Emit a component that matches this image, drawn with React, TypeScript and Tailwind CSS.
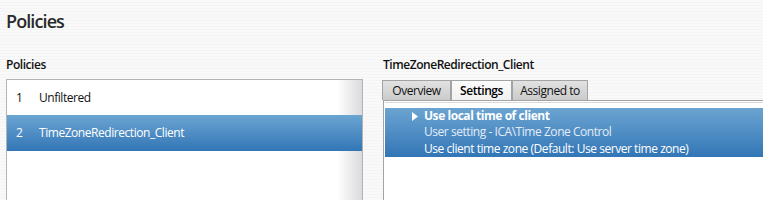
const font = "font-['Open_Sans','Noto_Sans',sans-serif]";

const Tab = ({ label, width, active }: { label: string; width: string; active?: boolean }) => (
    <div
        className={
            active
                ? `${width} h-[20px] flex items-center justify-center border border-b-0 border-[#a3a3a3] bg-gradient-to-b from-[#fbfbfb] to-[#f1f1f1] font-semibold text-black -mb-px z-10`
                : `${width} h-[20px] flex items-center justify-center border border-b-0 border-[#a3a3a3] bg-gradient-to-b from-[#e2e2e2] to-[#cbcbcb] text-[#111]`
        }
    >
        {label}
    </div>
);

export default function App() {
    return (
        <div
            className={`${font} w-[763px] h-[200px] overflow-hidden bg-[repeating-linear-gradient(180deg,#f9f9f9_0px,#f9f9f9_2px,#f4f4f4_2px,#f4f4f4_3px)] text-[12px] tracking-[-0.45px] text-[#111]`}
        >
            <div className="px-[6px] pt-[9px] h-[52px]">
                <h1 className="text-[18px] leading-[24px] tracking-[-0.9px] font-semibold text-[#2a2a2a]">Policies</h1>
            </div>

            <div className="flex">
                {/* left: policy list */}
                <div className="ml-[6px] w-[357px] flex flex-col">
                    <p className="font-semibold mt-[2px] h-[25px] leading-[22px]">Policies</p>
                    <div className="h-[200px] border border-[#b4b4b4] bg-[linear-gradient(90deg,#ffffff_0%,#ffffff_93%,#dadade_100%)]">
                        <div className="h-[35px] flex items-center">
                            <span className="w-[32px] pl-[9px]">1</span>
                            <span>Unfiltered</span>
                        </div>
                        <div className="h-[36px] flex items-center bg-gradient-to-b from-[#6ba4d1] to-[#3276b6] text-white">
                            <span className="w-[32px] pl-[9px]">2</span>
                            <span>TimeZoneRedirection_Client</span>
                        </div>
                    </div>
                </div>

                {/* right: details */}
                <div className="ml-[20px] flex-1 flex flex-col">
                    <p className="font-semibold mt-[2px] h-[26px] leading-[22px]">TimeZoneRedirection_Client</p>
                    <div className="flex -ml-px">
                        <Tab label="Overview" width="w-[69px]" />
                        <Tab label="Settings" width="w-[61px]" active />
                        <Tab label="Assigned to" width="w-[76px]" />
                    </div>
                    <div className="h-[200px] border-t border-l border-[#a3a3a3] bg-white pl-px">
                        <div className="h-[6px] border-t border-[#d8d8d8] mt-px" />
                        <div className="h-[49px] bg-gradient-to-b from-[#6ba4d1] to-[#3276b6] text-white flex flex-col justify-center leading-[16.5px] pl-[39px]">
                            <div className="flex items-center font-bold relative">
                                <svg className="absolute -left-[12px] top-[4px]" width="6" height="9" viewBox="0 0 6 9">
                                    <path d="M0 0 L6 4.5 L0 9 Z" fill="white" />
                                </svg>
                                Use local time of client
                            </div>
                            <div className="text-[#e4edf7]">User setting - ICA\Time Zone Control</div>
                            <div className="text-white">Use client time zone (Default: Use server time zone)</div>
                        </div>
                    </div>
                </div>
            </div>
        </div>
    );
}
